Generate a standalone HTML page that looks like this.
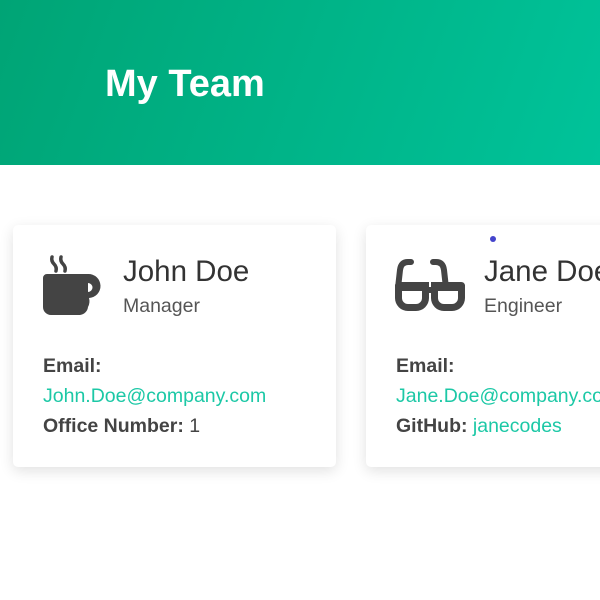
<!DOCTYPE html>
<html><head><style>
body{margin:0;width:600px;height:600px;overflow:hidden;background:#fff;font-family:"Liberation Sans",sans-serif;color:#444;}
.hdr{position:absolute;left:0;top:0;width:600px;height:165px;background:linear-gradient(110deg,#00a475,#00c39a);}
.hdr h1{position:absolute;left:105px;top:63px;margin:0;font-size:38px;font-weight:bold;color:#fff;}
.card{position:absolute;top:225px;width:323px;height:242px;background:#fff;border-radius:5px;box-shadow:0 4px 14px rgba(0,0,0,0.12);}
.name{position:absolute;left:110px;top:30px;font-size:29.5px;color:#333;}
.role{position:absolute;left:110px;top:70px;font-size:19.5px;color:#555;}
.info{position:absolute;left:30px;top:126px;font-size:19.5px;line-height:30px;color:#444;}
.info b{color:#444}
.info a{color:#1cc8a6;text-decoration:none;}
svg{position:absolute;}
</style></head><body>
<div class="hdr"><h1>My Team</h1></div>
<div class="card" style="left:13px">
<svg style="left:0;top:0" width="120" height="120" viewBox="0 0 120 120">
<path d="M39 32 q-1 4 2 7 q3 3 2 7 M48 32 q-1 4 2 7 q3 3 2 7" stroke="#444" stroke-width="3.5" fill="none" stroke-linecap="round"/>
<path d="M30 53 a4 4 0 0 1 4 -4 h41 v0 a12 12 0 0 1 1 24 h0 a12 12 0 0 1 -1 9 a9 9 0 0 1 -8 8 h-29 a8 8 0 0 1 -8 -8 z M75 58 v9 a4.5 4.5 0 0 0 0 -9z" fill="#444" fill-rule="evenodd"/>
</svg>
<div class="name">John Doe</div><div class="role">Manager</div>
<div class="info"><b>Email:</b><br><a>John.Doe@company.com</a><br><b>Office Number:</b> 1</div>
</div>
<div class="card" style="left:366px">
<svg style="left:0;top:0" width="120" height="120" viewBox="0 0 120 120">
<path d="M45 37 h-3 q-7 0 -8 8 l-2 18 M67 37 h3 q7 0 8 8 l2 18" stroke="#444" stroke-width="6" fill="none" stroke-linecap="round"/>
<path d="M29 60 a4 4 0 0 1 4 -3 h30 v5 h2 v-5 h30 a4 4 0 0 1 4 3 v13 a13 13 0 0 1 -13 13 h-8 a13 13 0 0 1 -13 -13 v-5 h-2 v5 a13 13 0 0 1 -13 13 h-8 a13 13 0 0 1 -13 -13z M36 66 v7 a6 6 0 0 0 6 6 h8 a6 6 0 0 0 6 -6 v-7z M72 66 v7 a6 6 0 0 0 6 6 h8 a6 6 0 0 0 6 -6 v-7z" fill="#444" fill-rule="evenodd"/>
</svg>
<div style="position:absolute;left:124px;top:11px;width:6px;height:6px;border-radius:3px;background:#4444cc"></div>
<div class="name" style="left:118px">Jane Doe</div><div class="role" style="left:118px">Engineer</div>
<div class="info"><b>Email:</b><br><a>Jane.Doe@company.com</a><br><b>GitHub:</b> <a>janecodes</a></div>
</div>
</body></html>
